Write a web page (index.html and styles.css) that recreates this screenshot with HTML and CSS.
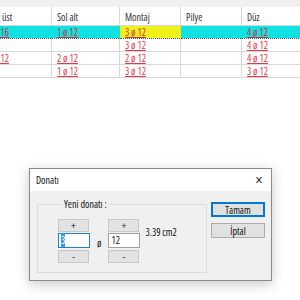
FILE: index.html
```html
<!DOCTYPE html>
<html lang="tr">
<head>
    <meta charset="UTF-8">
    <title>Donatı</title>
    <link rel="stylesheet" href="styles.css">
</head>
<body>
    <div class="topbar"></div>
    <table class="grid">
        <tr class="head">
            <th class="c1">Sağ üst</th>
            <th class="c2">Sol alt</th>
            <th class="c3">Montaj</th>
            <th class="c4">Pilye</th>
            <th class="c5">Düz</th>
        </tr>
        <tr class="sel">
            <td><span class="bar">1 ø 16</span></td>
            <td><span class="bar">1 ø 12</span></td>
            <td class="cur"><span class="bar">3 ø 12</span></td>
            <td></td>
            <td><span class="bar">4 ø 12</span></td>
        </tr>
        <tr>
            <td></td>
            <td></td>
            <td><span class="bar">3 ø 12</span></td>
            <td></td>
            <td><span class="bar">4 ø 12</span></td>
        </tr>
        <tr>
            <td><span class="bar">1 ø 12</span></td>
            <td><span class="bar">2 ø 12</span></td>
            <td><span class="bar">2 ø 12</span></td>
            <td></td>
            <td><span class="bar">4 ø 12</span></td>
        </tr>
        <tr>
            <td></td>
            <td><span class="bar">1 ø 12</span></td>
            <td><span class="bar">3 ø 12</span></td>
            <td></td>
            <td><span class="bar">3 ø 12</span></td>
        </tr>
    </table>

    <div class="dialog">
        <div class="titlebar">
            <span>Donatı</span>
            <span class="close">✕</span>
        </div>
        <div class="dlgbody">
            <fieldset class="group">
                <legend>Yeni donatı :</legend>
                <div class="spinrow">
                    <div class="spin">
                        <button class="step">+</button>
                        <div class="field focus"><span class="hl">3</span></div>
                        <button class="step">-</button>
                    </div>
                    <span class="phi">ø</span>
                    <div class="spin">
                        <button class="step">+</button>
                        <div class="field">12</div>
                        <button class="step">-</button>
                    </div>
                    <span class="area">3.39 cm2</span>
                </div>
            </fieldset>
            <div class="actions">
                <button class="btn default">Tamam</button>
                <button class="btn">İptal</button>
            </div>
        </div>
    </div>
</body>
</html>
```

FILE: styles.css
```css
/* Donati dialog over the rebar grid */
body {
    margin: 0;
    width: 300px;
    height: 300px;
    overflow: hidden;
    background-color: #fff;
    font-family: "Open Sans", "Liberation Sans", sans-serif;
    font-stretch: condensed;
    font-size: 10px;
    color: #111;
}
.topbar {
    height: 7px;
    background-color: #f0f0f0;
}
.grid {
    border-collapse: collapse;
    margin-left: -17px;
    table-layout: fixed;
    width: 325px;
}
.grid th, .grid td {
    padding: 0 0 0 5px;
    text-align: left;
    white-space: nowrap;
    overflow: hidden;
    border-right: 1px solid #d8d8d8;
    border-bottom: 1px solid #d8d8d8;
}
.grid th {
    height: 17px;
    font-weight: normal;
    color: #333;
    padding-top: 1px;
}
.grid td {
    height: 12px;
    line-height: 12px;
}
.c1 { width: 63px; }
.c2 { width: 62px; }
.c3 { width: 55px; }
.c4 { width: 55px; }
.c5 { width: 60px; }
.bar {
    color: #e8364a;
    text-decoration: underline;
}
.sel td {
    background-color: #0fe2e0;
    border-top: 1px dotted #555;
    border-bottom: 1px dotted #555;
    border-right: 1px solid #0fe2e0;
}
.sel td.cur {
    background-color: #f0f01a;
    border-right-color: #f0f01a;
}
.sel .bar {
    color: #c83040;
}

.dialog {
    margin: 90px 0 0 29px;
    width: 241px;
    height: 111px;
    border: 1px solid #8a8a8a;
    background-color: #f0f0f0;
    box-shadow: 0 3px 12px rgba(0, 0, 0, 0.22);
}
.titlebar {
    height: 22px;
    background-color: #fff;
    display: flex;
    align-items: center;
    justify-content: space-between;
    padding: 0 8px 0 6px;
}
.close {
    font-family: "DejaVu Sans", sans-serif;
    font-size: 11px;
    color: #333;
}
.dlgbody {
    display: flex;
    gap: 4px;
    padding: 6px 0 0 7px;
}
.group {
    margin: 0;
    width: 170px;
    height: 76px;
    box-sizing: border-box;
    border: 1px solid #dcdcdc;
    padding: 8px 0 0 20px;
}
.group legend {
    padding: 0 1px;
    margin-left: 5px;
}
.spinrow {
    display: flex;
    align-items: flex-start;
}
.spin {
    display: flex;
    flex-direction: column;
    width: 32px;
}
.step {
    width: 31px;
    height: 13px;
    padding: 0;
    border: 1px solid #c8c8c8;
    background-color: #e3e3e3;
    font-family: "Liberation Sans", sans-serif;
    font-size: 9px;
    line-height: 10px;
    color: #222;
}
.field {
    width: 32px;
    height: 15px;
    box-sizing: border-box;
    margin: 1px 0 2px;
    border: 1px solid #a0a0a0;
    background-color: #fff;
    padding: 0 0 0 2px;
    line-height: 13px;
}
.field.focus {
    border-color: #1e7fd6;
}
.hl {
    background-color: #3399ff;
    color: #fff;
}
.phi {
    margin: 17px 7px 0 7px;
}
.area {
    margin: 6px 0 0 5px;
}
.actions {
    display: flex;
    flex-direction: column;
    gap: 6px;
    margin-top: 5px;
}
.btn {
    width: 54px;
    height: 15px;
    padding: 0;
    border: 1px solid #adadad;
    background-color: #e1e1e1;
    font-family: inherit;
    font-stretch: condensed;
    font-size: 10px;
    line-height: 12px;
    color: #111;
}
.btn.default {
    border: 1px solid #0078d7;
    box-shadow: inset 0 0 0 1px #0078d7;
}
```
